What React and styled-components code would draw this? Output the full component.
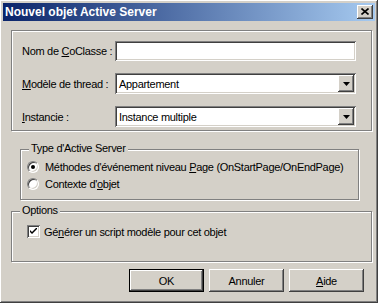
import React from "react";
import styled, { createGlobalStyle } from "styled-components";

const FACE = "#D4D0C8";

const GlobalStyle = createGlobalStyle`
  html, body {
    margin: 0;
    padding: 0;
    background: ${FACE};
  }
  * {
    box-sizing: border-box;
  }
`;

const raised = `
  box-shadow: inset -1px -1px #404040, inset 1px 1px #ffffff,
    inset -2px -2px #808080, inset 2px 2px ${FACE};
`;

const sunken = `
  box-shadow: inset 1px 1px #808080, inset -1px -1px #ffffff,
    inset 2px 2px #404040, inset -2px -2px ${FACE};
`;

const Window = styled.div`
  width: 378px;
  height: 303px;
  padding: 3px;
  background: ${FACE};
  ${raised}
  display: flex;
  flex-direction: column;
  font-family: "Liberation Sans", Arial, sans-serif;
  font-size: 11px;
  letter-spacing: -0.3px;
  color: #000;
`;

const TitleBar = styled.div`
  height: 18px;
  display: flex;
  align-items: center;
  justify-content: space-between;
  padding: 0 2px 0 2px;
  background: linear-gradient(to right, #0a246a, #a6caf0);
  color: #fff;
  font-weight: bold;
  font-size: 12px;
  letter-spacing: 0;
`;

const CloseButton = styled.div`
  width: 16px;
  height: 14px;
  background: ${FACE};
  ${raised}
  display: flex;
  align-items: center;
  justify-content: center;
  padding-bottom: 1px;
`;

const Body = styled.div`
  flex: 1;
  display: flex;
  flex-direction: column;
  padding: 9px 3px 0 8px;
`;

const Etched = `
  border: 1px solid #808080;
  box-shadow: inset 1px 1px #ffffff, 1px 1px #ffffff;
`;

const Panel = styled.div`
  ${Etched}
  height: 101px;
  padding: 10px 15px 0 10px;
  display: flex;
  flex-direction: column;
  gap: 12px;
`;

const FieldRow = styled.div`
  display: flex;
  align-items: center;
`;

const Label = styled.div`
  width: 93px;
  white-space: nowrap;
`;

const Edit = styled.div`
  flex: 1;
  height: ${(p) => (p.$combo ? 21 : 20)}px;
  background: #fff;
  ${sunken}
  display: flex;
  align-items: center;
  padding: 2px 2px 2px 4px;
`;

const EditText = styled.div`
  flex: 1;
  white-space: nowrap;
`;

const DropButton = styled.div`
  width: 16px;
  height: 17px;
  background: ${FACE};
  ${raised}
  display: flex;
  align-items: center;
  justify-content: center;
`;

const Group = styled.div`
  ${Etched}
  position: relative;
  height: 51px;
  margin: ${(p) => p.$margin};
  padding: ${(p) => p.$padding};
  display: flex;
  flex-direction: column;
`;

const Legend = styled.div`
  position: absolute;
  top: -8px;
  left: 8px;
  padding: 0 2px;
  line-height: 13px;
  background: ${FACE};
  white-space: nowrap;
`;

const OptionRow = styled.div`
  height: 17px;
  display: flex;
  align-items: center;
  gap: ${(p) => p.$gap}px;
  white-space: nowrap;
`;

const Radio = styled.div`
  width: 12px;
  height: 12px;
  border-radius: 50%;
  background: #fff;
  border: 1px solid;
  border-color: #808080 #ffffff #ffffff #808080;
  box-shadow: inset 1px 1px #404040, inset -1px -1px ${FACE};
  display: flex;
  align-items: center;
  justify-content: center;

  &::after {
    content: "";
    width: 4px;
    height: 4px;
    border-radius: 50%;
    background: ${(p) => (p.$checked ? "#000" : "transparent")};
  }
`;

const Checkbox = styled.div`
  width: 13px;
  height: 13px;
  background: #fff;
  ${sunken}
  display: flex;
  align-items: center;
  justify-content: center;
`;

const ButtonBar = styled.div`
  display: flex;
  justify-content: flex-end;
  gap: 5px;
  margin-top: 7px;
  padding-right: 8px;
`;

const Button = styled.div`
  width: 75px;
  height: 23px;
  background: ${FACE};
  display: flex;
  align-items: center;
  justify-content: center;
  ${(p) =>
    p.$default
      ? `box-shadow: inset 0 0 0 1px #000000, inset -2px -2px #404040, inset 2px 2px #ffffff,
    inset -3px -3px #808080;`
      : raised}
`;

const Arrow = () => (
  <svg width="7" height="4" viewBox="0 0 7 4">
    <polygon points="0,0 7,0 3.5,4" fill="#000" />
  </svg>
);

const fields = [
  { label: <>Nom de <u>C</u>oClasse :</>, value: "" },
  { label: <><u>M</u>odèle de thread :</>, value: "Appartement", combo: true },
  { label: <><u>I</u>nstancie :</>, value: "Instance multiple", combo: true },
];

export default function App() {
  return (
    <>
      <GlobalStyle />
      <Window>
        <TitleBar>
          <span>Nouvel objet Active Server</span>
          <CloseButton>
            <svg width="8" height="7" viewBox="0 0 8 7">
              <path d="M0.5 0.5 L7.5 6.5 M7.5 0.5 L0.5 6.5" stroke="#000" strokeWidth="1.6" />
            </svg>
          </CloseButton>
        </TitleBar>
        <Body>
          <Panel>
            {fields.map((f, i) => (
              <FieldRow key={i}>
                <Label>{f.label}</Label>
                <Edit $combo={f.combo}>
                  <EditText>{f.value}</EditText>
                  {f.combo && (
                    <DropButton>
                      <Arrow />
                    </DropButton>
                  )}
                </Edit>
              </FieldRow>
            ))}
          </Panel>

          <Group $margin="18px 13px 0 9px" $padding="8px 0 0 6px">
            <Legend>Type d'Active Server</Legend>
            <OptionRow $gap={6}>
              <Radio $checked />
              <span>
                Méthodes d'événement niveau <u>P</u>age (OnStartPage/OnEndPage)
              </span>
            </OptionRow>
            <OptionRow $gap={6}>
              <Radio />
              <span>
                Contexte d'<u>o</u>bjet
              </span>
            </OptionRow>
          </Group>

          <Group $margin="11px 0 0 0" $padding="11px 0 0 15px">
            <Legend>Options</Legend>
            <OptionRow $gap={4}>
              <Checkbox>
                <svg width="7" height="7" viewBox="0 0 7 7">
                  <path d="M0 2 L0 4 L2 6 L7 1 L7 -1 L2 4 Z" fill="#000" />
                </svg>
              </Checkbox>
              <span>
                Gé<u>n</u>érer un script modèle pour cet objet
              </span>
            </OptionRow>
          </Group>

          <ButtonBar>
            <Button $default>OK</Button>
            <Button>Annuler</Button>
            <Button>
              <span>
                <u>A</u>ide
              </span>
            </Button>
          </ButtonBar>
        </Body>
      </Window>
    </>
  );
}
